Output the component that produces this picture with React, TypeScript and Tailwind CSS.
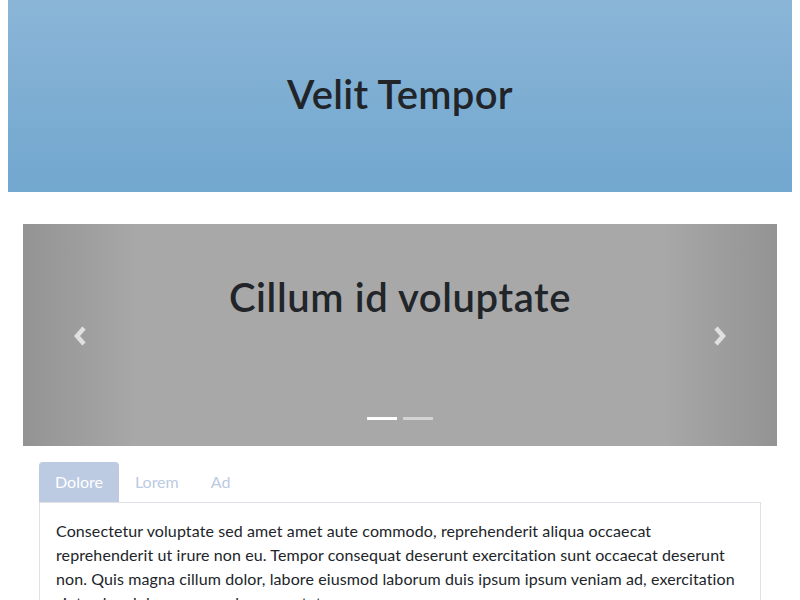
export default function App() {
  return (
    <div className="min-h-screen bg-white px-2 font-['Lato','Noto_Sans',sans-serif] text-[#212529]">
      <header className="flex h-[192px] items-center justify-center bg-gradient-to-b from-[#8ab5d7] to-[#72a7ce]">
        <h1 className="-mt-1 text-[40px] font-semibold leading-[1.2] tracking-[0.3px]">Velit Tempor</h1>
      </header>

      <div className="mt-8 px-[15px]">
        <div className="relative h-[222px] bg-[#a8a8a8]">
          <div className="absolute inset-y-0 left-0 w-[15%] bg-gradient-to-r from-[#939393] to-transparent" />
          <div className="absolute inset-y-0 right-0 w-[15%] bg-gradient-to-l from-[#939393] to-transparent" />
          <h2 className="relative pt-[49px] text-center text-[40px] font-semibold leading-[1.2] tracking-[0.6px]">Cillum id voluptate</h2>
          <button className="absolute left-[49px] top-[101px] text-[#e0e0e0]">
            <svg width="16" height="22" viewBox="0 0 16 22">
              <polyline points="12,3 5,11 12,19" fill="none" stroke="currentColor" strokeWidth="4.5" />
            </svg>
          </button>
          <button className="absolute right-[49px] top-[101px] text-[#e0e0e0]">
            <svg width="16" height="22" viewBox="0 0 16 22">
              <polyline points="4,3 11,11 4,19" fill="none" stroke="currentColor" strokeWidth="4.5" />
            </svg>
          </button>
          <div className="absolute inset-x-0 bottom-[26px] flex justify-center gap-[6px]">
            <span className="h-[3px] w-[30px] bg-white" />
            <span className="h-[3px] w-[30px] bg-white/50" />
          </div>
        </div>

        <div className="mt-4 px-4">
          <ul className="flex">
            <li className="rounded-t bg-[#bccae2] px-4 py-2 leading-6 text-white">Dolore</li>
            <li className="px-4 py-2 leading-6 text-[#bccae2]">Lorem</li>
            <li className="px-4 py-2 leading-6 text-[#bccae2]">Ad</li>
          </ul>
          <div className="border border-[#dee2e6] p-4 leading-6 tracking-[0.1px]">
            <p>
              Consectetur voluptate sed amet amet aute commodo, reprehenderit aliqua occaecat reprehenderit ut irure non eu. Tempor consequat deserunt exercitation sunt occaecat deserunt non. Quis magna cillum dolor, labore eiusmod laborum duis ipsum ipsum veniam ad, exercitation sint culpa dolore commodo consectetur.
            </p>
          </div>
        </div>
      </div>
    </div>
  );
}
